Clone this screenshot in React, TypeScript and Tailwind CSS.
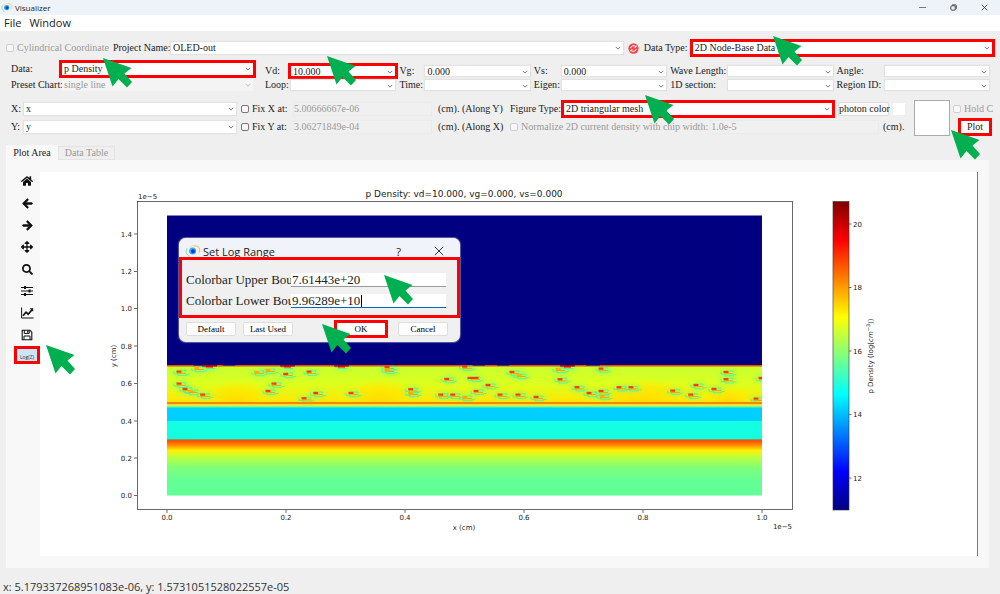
import React from "react";
import { FaHome, FaArrowLeft, FaArrowRight, FaArrowsAlt, FaSearch } from "react-icons/fa";
import clsx from "clsx";

const SERIF = "font-['Liberation_Serif','Noto_Sans_CJK_TC',serif]";
const SANS = "font-['Open_Sans','Noto_Sans',sans-serif]";
const RED = "outline-[3px] outline-solid outline-[#ff0000]";

function Arrow({ className }: { className: string }) {
  return (
    <svg
      viewBox="0 0 29 30"
      className={clsx("pointer-events-none absolute z-20 h-[30px] w-[29px]", className)}
      aria-hidden="true"
    >
      <polygon points="0,0 28.5,10 21.5,15.5 29,24 24,29.5 15.5,21 9.5,28.5" fill="#00b050" />
    </svg>
  );
}

function Logo({ className }: { className?: string }) {
  return (
    <svg viewBox="0 0 16 12" className={className} aria-hidden="true">
      <path d="M2.2 3.2C.4 6 1 9.600 4.500 11.200" fill="none" stroke="#8ccf9a" strokeWidth="1" />
      <path d="M9 1c4-.8 7 2.500 5 6.500" fill="none" stroke="#f0c95a" strokeWidth="1.200" />
      <path d="M4 2.500C6 .8 8 .6 9 1" fill="none" stroke="#e9dca0" strokeWidth=".8" />
      <circle cx="7.600" cy="6" r="3.500" fill="#38a8f5" />
      <circle cx="8" cy="6.200" r="2" fill="#0a3fd0" />
    </svg>
  );
}

type ComboProps = {
  label: string;
  value?: string;
  disabled?: boolean;
  marked?: boolean;
  className?: string;
  children?: React.ReactNode;
};

function Combo({ label, value = "", disabled, marked, className, children }: ComboProps) {
  return (
    <div
      className={clsx(
        "relative h-3 min-w-0",
        disabled ? "bg-[#f4f4f4]" : "bg-white shadow-[0_0_1px_1px_#e2e2e2]",
        marked && RED,
        className,
      )}
    >
      <select
        aria-label={label}
        disabled={disabled}
        className={clsx(
          "block h-3 w-full appearance-none bg-transparent pr-3 pl-[2px] text-[10px] leading-3 opacity-100 outline-none",
          disabled ? "text-[#9a9a9a]" : "text-[#222]",
        )}
      >
        <option>{value}</option>
      </select>
      <svg viewBox="0 0 8 5" className="pointer-events-none absolute top-1 right-[2px] h-1 w-[6px]" aria-hidden="true">
        <path d="M1 1l3 3 3-3" fill="none" stroke={disabled ? "#bbb" : "#666"} strokeWidth="1.200" />
      </svg>
      {children}
    </div>
  );
}

function Check({ text, disabled }: { text: string; disabled?: boolean }) {
  return (
    <label className={clsx("flex items-center gap-[3px] whitespace-nowrap", disabled && "text-[#9a9a9a]")}>
      <input
        type="checkbox"
        disabled={disabled}
        className={clsx(
          "h-2 w-2 shrink-0 appearance-none rounded-[2px] border bg-[#f8f8f8]",
          disabled ? "border-[#cfcfcf]" : "border-[#777]",
        )}
      />
      {text}
    </label>
  );
}

function Disabled({ label, value, className }: { label: string; value: string; className?: string }) {
  return (
    <input
      aria-label={label}
      disabled
      defaultValue={value}
      className={clsx(
        "h-[14px] min-w-0 border border-[#ebebeb] bg-[#f0f0f0] text-[10px] leading-3 text-[#9a9a9a]",
        className,
      )}
    />
  );
}

const parameters: { name: string; value?: string; marked?: boolean }[] = [
  { name: "Vd", value: "10.000", marked: true },
  { name: "Vg", value: "0.000" },
  { name: "Vs", value: "0.000" },
  { name: "Wave Length" },
  { name: "Angle" },
  { name: "Loop" },
  { name: "Time" },
  { name: "Eigen" },
  { name: "1D section" },
  { name: "Region ID" },
];

function Controls() {
  return (
    <section className={clsx("pt-2 text-[10px] leading-3 text-[#222]", SERIF)}>
      <div className="flex h-[18px] items-center pr-2 pl-[6px]">
        <Check text="Cylindrical Coordinate" disabled />
        <span className="ml-1 w-[58px] whitespace-nowrap">Project Name:</span>
        <Combo label="Project Name" value="OLED-out" className="flex-[453]" />
        <button aria-label="Refresh" className="mx-[5px] flex h-[11px] w-[11px] items-center justify-center">
          <svg viewBox="0 0 12 12" className="h-[11px] w-[11px]">
            <circle cx="6" cy="6" r="5.600" fill="#f2474b" />
            <path
              d="M3 5.500A3.100 3.100 0 0 1 8.600 4.200M9 6.500A3.100 3.100 0 0 1 3.400 7.800M8.800 2.600v1.900H7M3.200 9.400V7.500H5"
              fill="none"
              stroke="#fff"
              strokeWidth="1"
            />
          </svg>
        </button>
        <span className="w-[49px] whitespace-nowrap">Data Type:</span>
        <Combo label="Data Type" value="2D Node-Base Data" marked className="flex-[300]">
          <Arrow className="-top-[6px] left-20" />
        </Combo>
      </div>

      <div className="mt-[3px] flex pr-[11px] pl-[11px]">
        <div className="grid flex-[242] grid-cols-[51px_1fr] grid-rows-[18px_14px] items-center">
          <span>Data:</span>
          <Combo label="Data" value="p Density" marked>
            <Arrow className="-top-[5px] left-[41px]" />
          </Combo>
          <span className="whitespace-nowrap">Preset Chart:</span>
          <Combo label="Preset Chart" value="single line" disabled />
        </div>
        <div className="ml-3 grid flex-[724] grid-cols-[26px_1fr_30px_1fr_32px_1fr_62px_1fr_52px_1fr] grid-rows-[14px_14px] content-end items-center">
          {parameters.map((p, i) => (
            <React.Fragment key={p.name}>
              <span className={clsx("whitespace-nowrap", i % 5 !== 0 && "pl-1")}>{p.name}:</span>
              <Combo label={p.name} value={p.value} marked={p.marked} className="h-[10px]">
                {p.marked && <Arrow className="-top-[10px] left-9" />}
              </Combo>
            </React.Fragment>
          ))}
        </div>
      </div>

      <div className="mt-2 flex h-9 pr-2 pl-[11px]">
        <div className="grid flex-[499] grid-cols-[13px_1fr_54px_142px_78px] grid-rows-[17px_19px] items-center">
          <span>X:</span>
          <Combo label="X" value="x" />
          <div className="pl-[5px]">
            <Check text="Fix X at:" />
          </div>
          <Disabled label="Fix X value" value="5.00666667e-06" className="ml-[3px]" />
          <span className="pl-[6px] whitespace-nowrap">(cm). (Along Y)</span>
          <span>Y:</span>
          <Combo label="Y" value="y" />
          <div className="pl-[5px]">
            <Check text="Fix Y at:" />
          </div>
          <Disabled label="Fix Y value" value="3.06271849e-04" className="ml-[3px]" />
          <span className="pl-[6px] whitespace-nowrap">(cm). (Along X)</span>
        </div>
        <div className="flex-[395]">
          <div className="flex h-[17px] items-center">
            <span className="w-[54px] whitespace-nowrap">Figure Type:</span>
            <Combo label="Figure Type" value="2D triangular mesh" marked className="flex-1">
              <Arrow className="-top-2 left-[81px]" />
            </Combo>
            <button className="ml-[6px] h-[14px] w-[51px] rounded-[2px] border border-[#dcdcdc] bg-[#fafafa] whitespace-nowrap">
              photon color
            </button>
            <span className="ml-1 h-3 w-3 bg-white" />
          </div>
          <div className="flex h-[19px] items-center">
            <Check text="Normalize 2D current density with chip width:" disabled />
            <Disabled label="Chip width" value="1.0e-5" className="ml-[2px] flex-1" />
            <span className="ml-1 w-[22px]">(cm).</span>
          </div>
        </div>
        <div className="ml-[9px] h-9 w-9 border border-[#aaa] bg-white" />
        <div className="ml-[3px] flex w-[39px] flex-col">
          <div className="mt-[3px]">
            <Check text="Hold C" disabled />
          </div>
          <div className={clsx("relative mt-[6px] ml-2 h-3 w-7 bg-white", RED)}>
            <button className="block h-3 w-full">Plot</button>
            <Arrow className="top-[9px] -left-[10px]" />
          </div>
        </div>
      </div>
    </section>
  );
}

function SlidersIcon() {
  return (
    <svg viewBox="0 0 12 12" className="h-3 w-3" aria-hidden="true">
      <path d="M0 2.500h12M0 6h12M0 9.500h12" stroke="#111" strokeWidth="1.100" />
      <path d="M4 1v3M8.500 4.500v3M4 8v3" stroke="#111" strokeWidth="2" />
    </svg>
  );
}

function CurveIcon() {
  return (
    <svg viewBox="0 0 13 12" className="h-3 w-[13px]" aria-hidden="true">
      <path d="M.6.500v10.500h12" fill="none" stroke="#111" strokeWidth="1" />
      <path d="M2 8.800l3-3.600 2.200 2 3.800-4.400" fill="none" stroke="#111" strokeWidth="1.700" />
      <path d="M8.600 1.200h3.600v3.600z" fill="#111" />
    </svg>
  );
}

function SaveIcon() {
  return (
    <svg viewBox="0 0 12 12" className="h-3 w-3" aria-hidden="true">
      <path d="M1.200 1.200h7.600l2 2v7.600H1.200z" fill="none" stroke="#111" strokeWidth="1.100" strokeLinejoin="round" />
      <path d="M3.300 1.200v3.200h4.900V1.200M3 10.800V7h6v3.800" fill="none" stroke="#111" strokeWidth="1" />
      <path d="M6.800 1.500v2.300" stroke="#111" strokeWidth="1.200" />
    </svg>
  );
}

const tools = [
  { name: "Home", icon: <FaHome className="h-3 w-3" /> },
  { name: "Back", icon: <FaArrowLeft className="h-[11px] w-[11px] stroke-current stroke-[36]" /> },
  { name: "Forward", icon: <FaArrowRight className="h-[11px] w-[11px] stroke-current stroke-[36]" /> },
  { name: "Pan", icon: <FaArrowsAlt className="h-3 w-3" /> },
  { name: "Zoom", icon: <FaSearch className="h-[11px] w-[11px]" /> },
  { name: "Subplots", icon: <SlidersIcon /> },
  { name: "Customize", icon: <CurveIcon /> },
  { name: "Save", icon: <SaveIcon /> },
];

// [x, y, kind]: n = normal cell, t = wide cell on the top edge, f = faint cell, w = wide thin cell
const traps: [number, number, string][] = [
  [179, 371.7, "n"], [196.7, 368, "f"], [209, 366, "t"], [179, 383.7, "n"], [185, 389, "n"], [190.7, 391, "f"],
  [202.7, 394.7, "n"], [256.7, 372, "f"], [268, 370, "f"], [287, 366, "t"], [285.7, 374, "n"], [274, 383.7, "n"],
  [268, 391, "n"], [309, 371.7, "n"], [304, 398.3, "n"], [315.7, 393, "n"], [341, 366, "t"], [351, 393, "n"],
  [387, 367, "n"], [387, 370, "f"], [410.7, 389.3, "n"], [410.7, 393, "f"], [446.7, 379, "n"], [440.7, 394.7, "n"],
  [452.7, 394.7, "n"], [464.7, 366.7, "n"], [473, 378, "w"], [488, 385, "n"], [476, 391, "n"], [464.7, 397, "f"],
  [500, 394.7, "n"], [512, 372, "n"], [519, 375, "f"], [518, 394.7, "n"], [536, 397, "n"], [560, 379.3, "n"],
  [558, 369, "f"], [567, 366, "t"], [601, 368.7, "n"], [577, 387.3, "n"], [589, 393, "n"], [601, 391, "n"],
  [602, 396, "f"], [619, 387.3, "n"], [631, 387.3, "n"], [672.7, 390.7, "n"], [690.7, 394.7, "n"], [696, 385, "n"],
  [714, 389, "n"], [726, 372, "n"], [726, 379.3, "n"], [756, 398.7, "n"], [761, 378, "n"],
];

function Trap({ x, y, kind }: { x: number; y: number; kind: string }) {
  if (kind === "t") {
    return (
      <g>
        <rect x={x - 7} y={365} width={15} height={1.5} fill="#b00000" />
        <rect x={x - 3} y={366} width={7} height={1.5} fill="#f00000" />
        <path d={`M${x - 6} 367.500h3M${x - 3} 368.500h9`} stroke="#40f0b0" strokeWidth=".8" />
      </g>
    );
  }
  const w = kind === "w" ? 11 : 5;
  return (
    <g>
      <path
        d={`M${x - 5} ${y}v2.200h4v1.500h8.500v-1.200h3M${x + 3} ${y - 1}h4v1.400`}
        fill="none"
        stroke="#28e6c8"
        strokeWidth=".8"
        opacity=".65"
      />
      <rect x={x - 2} y={y + 1.2} width={9} height={0.9} fill="#ff9800" />
      <rect x={x - w / 2} y={y - 1.2} width={w} height={2.2} fill={kind === "f" ? "#ffb000" : "#ff3c00"} />
    </g>
  );
}

const xTicks: [number, string][] = [
  [167, "0.0"], [286, "0.2"], [405, "0.4"], [524, "0.6"], [643, "0.8"], [762, "1.0"],
];
const yTicks: [number, string][] = [
  [495.5, "0.0"], [458, "0.2"], [421, "0.4"], [383.5, "0.6"], [346, "0.8"], [308.5, "1.0"], [271.5, "1.2"], [234, "1.4"],
];
const barTicks: [number, string][] = [
  [224, "20"], [287.5, "18"], [351, "16"], [414.5, "14"], [478, "12"],
];

function DensityPlot() {
  return (
    <svg
      viewBox="40 172 937 384"
      className="block w-full bg-white font-['DejaVu_Sans',sans-serif] text-[7px]"
      fill="#222"
      role="img"
      aria-label="p Density"
    >
      <defs>
        <linearGradient id="jet" x1="0" y1="1" x2="0" y2="0">
          <stop offset="0" stopColor="#000080" />
          <stop offset=".125" stopColor="#0000ff" />
          <stop offset=".375" stopColor="#00ffff" />
          <stop offset=".625" stopColor="#ffff00" />
          <stop offset=".875" stopColor="#ff0000" />
          <stop offset="1" stopColor="#800000" />
        </linearGradient>
        <linearGradient id="active" x1="0" y1="0" x2="0" y2="1">
          <stop offset="0" stopColor="#c8ff30" />
          <stop offset=".5" stopColor="#dcff1e" />
          <stop offset="1" stopColor="#ffe600" />
        </linearGradient>
        <linearGradient id="edge" x1="0" y1="0" x2="0" y2="1">
          <stop offset="0" stopColor="#ffe600" />
          <stop offset=".4" stopColor="#c0ff40" />
          <stop offset="1" stopColor="#00e0f8" />
        </linearGradient>
        <linearGradient id="bottom" x1="0" y1="0" x2="0" y2="1">
          <stop offset="0" stopColor="#ff4000" />
          <stop offset=".1" stopColor="#ff9400" />
          <stop offset=".19" stopColor="#fff000" />
          <stop offset=".3" stopColor="#c0ff3c" />
          <stop offset=".5" stopColor="#80ff78" />
          <stop offset=".75" stopColor="#62ff97" />
          <stop offset="1" stopColor="#62ff97" />
        </linearGradient>
        <radialGradient id="dome">
          <stop offset="0" stopColor="#ffdc00" />
          <stop offset=".6" stopColor="#ffe800" stopOpacity=".8" />
          <stop offset="1" stopColor="#fff000" stopOpacity="0" />
        </radialGradient>
        <radialGradient id="halo">
          <stop offset="0" stopColor="#60ff98" stopOpacity=".55" />
          <stop offset="1" stopColor="#a0ff50" stopOpacity="0" />
        </radialGradient>
        <clipPath id="band">
          <rect x="167" y="365" width="595" height="37" />
        </clipPath>
      </defs>

      <rect x="167" y="215.500" width="595" height="150" fill="#000080" />
      <rect x="167" y="365" width="595" height="37.500" fill="url(#active)" />
      <g clipPath="url(#band)">
        <ellipse cx="237" cy="402" rx="38" ry="22" fill="url(#dome)" />
        <ellipse cx="380" cy="402" rx="42" ry="24" fill="url(#dome)" />
        <ellipse cx="645" cy="402" rx="62" ry="24" fill="url(#dome)" />
        <ellipse cx="728" cy="402" rx="30" ry="16" fill="url(#dome)" />
        {traps.map(([x, y], i) => (
          <ellipse key={i} cx={x + 2} cy={y + 1} rx="13" ry="8" fill="url(#halo)" />
        ))}
        <rect x="167" y="365" width="595" height="1.500" fill="#f04800" />
        <path d="M193 365.300h14M223 365.300h12M473 365.300h12M497 365.300h12M586 365.300h14" stroke="#303070" strokeWidth="1" />
        {traps.map(([x, y, kind], i) => (
          <Trap key={i} x={x} y={y} kind={kind} />
        ))}
      </g>
      <rect x="167" y="402" width="595" height="2.500" fill="#ff8400" />
      <rect x="167" y="404.500" width="595" height="3.500" fill="url(#edge)" />
      <rect x="167" y="408" width="595" height="13" fill="#00cfff" />
      <rect x="167" y="421" width="595" height="18.500" fill="#14ffe2" />
      <rect x="167" y="440" width="595" height="55.500" fill="url(#bottom)" />
      <rect x="167" y="439" width="595" height="1.200" fill="#8a9a50" />

      <rect x="137.500" y="201.500" width="655" height="308" fill="none" stroke="#444" strokeWidth=".8" />
      {xTicks.map(([x, t]) => (
        <g key={t}>
          <path d={`M${x} 510v3`} stroke="#444" strokeWidth=".8" />
          <text x={x} y="520" textAnchor="middle">{t}</text>
        </g>
      ))}
      {yTicks.map(([y, t]) => (
        <g key={t}>
          <path d={`M137 ${y}h-3`} stroke="#444" strokeWidth=".8" />
          <text x="132" y={y + 2.5} textAnchor="end">{t}</text>
        </g>
      ))}
      <text x="138" y="199">1e−5</text>
      <text x="792" y="529" textAnchor="end">1e−5</text>
      <text x="464" y="530" textAnchor="middle">x (cm)</text>
      <text transform="translate(116 356) rotate(-90)" textAnchor="middle">y (cm)</text>
      <text x="464" y="197" textAnchor="middle" className="text-[9px]">
        p Density: vd=10.000, vg=0.000, vs=0.000
      </text>

      <rect x="833" y="201.500" width="16" height="308.500" fill="url(#jet)" stroke="#333" strokeWidth=".6" />
      {barTicks.map(([y, t]) => (
        <g key={t}>
          <path d={`M849 ${y}h2.500`} stroke="#444" strokeWidth=".8" />
          <text x="853" y={y + 2.5}>{t}</text>
        </g>
      ))}
      <text transform="translate(873 356) rotate(-90)" textAnchor="middle">
        p Density (log(<tspan fontStyle="italic">cm</tspan>
        <tspan dy="-3" fontSize="5">−3</tspan>
        <tspan dy="3">))</tspan>
      </text>
    </svg>
  );
}

function DialogButton({ children }: { children: React.ReactNode }) {
  return (
    <button className="h-[14px] w-[50px] rounded-[2px] border border-[#dedede] bg-[#fdfdfd] text-[9px] leading-3 text-black">
      {children}
    </button>
  );
}

function LogRangeDialog() {
  return (
    <div
      role="dialog"
      aria-label="Set Log Range"
      className={clsx(
        "absolute top-[66px] left-[139px] z-10 w-[281px] rounded-[7px] bg-[#f0f0f0] pb-[6px] shadow-[0_0_1px_1px_#5a5aa0]",
        SERIF,
      )}
    >
      <div className={clsx("flex h-[22px] items-end rounded-t-[7px] bg-[#f0f3fa] pr-4 pl-[6px] text-[11px] leading-4 text-[#222]", SANS)}>
        <Logo className="mr-[2px] mb-[3px] h-3 w-4" />
        <span className="flex-1">Set Log Range</span>
        <button aria-label="Help" className="mr-[33px] leading-4">?</button>
        <button aria-label="Close" className="pb-1">
          <svg viewBox="0 0 10 10" className="h-[10px] w-[10px]">
            <path d="M.8.8l8.400 8.400M9.200.8L.8 9.200" stroke="#333" strokeWidth="1" />
          </svg>
        </button>
      </div>
      <div className={clsx("relative mx-[3px] mt-0 grid grid-cols-[109px_1fr] gap-y-[7px] pt-[13px] pr-[11px] pb-[7px] text-[13px] leading-[14px] text-[#222]", RED)}>
        <label htmlFor="upper" className="pl-1 whitespace-nowrap">Colorbar Upper Bou</label>
        <input
          id="upper"
          defaultValue="7.61443e+20"
          className="h-[14px] min-w-0 border-b border-[#999] bg-white pl-px outline-none"
        />
        <label htmlFor="lower" className="pl-1 whitespace-nowrap">Colorbar Lower Bou</label>
        <div className="flex h-[14px] min-w-0 items-center border-b border-[#0067c0] bg-white">
          <input id="lower" defaultValue="9.96289e+10" className="h-[13px] w-[70px] min-w-0 bg-transparent pl-px outline-none" />
          <span className="h-3 w-px bg-black" />
        </div>
        <Arrow className="top-[15px] left-[202px]" />
      </div>
      <div className="relative mt-[7px] flex items-center pr-3 pl-[7px]">
        <DialogButton>Default</DialogButton>
        <span className="w-[7px]" />
        <DialogButton>Last Used</DialogButton>
        <span className="flex-1" />
        <button className={clsx("mr-[13px] h-3 w-12 bg-white text-[9px] leading-3 text-black", RED)}>OK</button>
        <DialogButton>Cancel</DialogButton>
        <Arrow className="top-[2px] left-[143px]" />
      </div>
    </div>
  );
}

export default function App() {
  return (
    <div className={clsx("flex min-h-screen flex-col overflow-x-hidden bg-[#efefef]", SANS)}>
      <header className="flex h-[15px] items-center bg-[#eef3fa] pr-3 pl-px text-[8px] leading-[14px] text-[#222]">
        <Logo className="mr-[2px] h-[9px] w-3" />
        <h1 className="flex-1">Visualizer</h1>
        <button aria-label="Minimize" className="mr-[23px] flex h-2 w-2 items-center">
          <span className="block h-px w-[7px] bg-[#777]" />
        </button>
        <button aria-label="Restore" className="mr-6">
          <svg viewBox="0 0 8 8" className="h-[7px] w-[7px]">
            <rect x="1" y="2" width="5" height="5" rx="1" fill="none" stroke="#333" strokeWidth="1" />
            <path d="M2.500 1h3.500a1.200 1.200 0 0 1 1.200 1.200v3.300" fill="none" stroke="#333" strokeWidth="1" />
          </svg>
        </button>
        <button aria-label="Close">
          <svg viewBox="0 0 8 8" className="h-[7px] w-[7px]">
            <path d="M.8.8l6.400 6.400M7.200.8L.8 7.200" stroke="#333" strokeWidth="1" />
          </svg>
        </button>
      </header>
      <nav className="flex h-4 items-center gap-2 bg-white pl-1 text-[11px] leading-4 text-[#222]">
        <button>File</button>
        <button>Window</button>
      </nav>

      <Controls />

      <main className="mt-[9px] mr-[11px] ml-[6px]">
        <div className={clsx("flex h-[15px] items-end text-[10px] leading-3", SERIF)} role="tablist">
          <button role="tab" aria-selected="true" className="h-[15px] w-[52px] bg-[#f8f8f8] text-[#222]">
            Plot Area
          </button>
          <button role="tab" aria-selected="false" className="h-[14px] w-[57px] border border-[#e4e4e4] text-[#999]">
            Data Table
          </button>
        </div>
        <div className="flex bg-[#f8f8f8] pt-3 pr-[11px] pb-3">
          <div className="-mt-[2px] flex w-[34px] flex-col items-center pl-2 text-[#111]">
            {tools.map((t) => (
              <button key={t.name} aria-label={t.name} className="flex h-[22px] w-5 shrink-0 items-center justify-center">
                {t.icon}
              </button>
            ))}
            <div className={clsx("relative mt-[3px] h-3 w-5 bg-[#cce4f7]", RED)}>
              <button className="flex h-3 w-5 items-end justify-center text-[5px] leading-[8px] text-[#334]">Log(Z)</button>
              <Arrow className="-top-1 left-[29px]" />
            </div>
          </div>
          <div className="relative min-w-0 flex-1 border-r border-[#777]">
            <DensityPlot />
            <LogRangeDialog />
          </div>
        </div>
      </main>

      <footer className="mt-3 pl-[3px] text-[11px] leading-[14px] text-[#333]">
        x: 5.179337268951083e-06, y: 1.5731051528022557e-05
      </footer>
    </div>
  );
}
